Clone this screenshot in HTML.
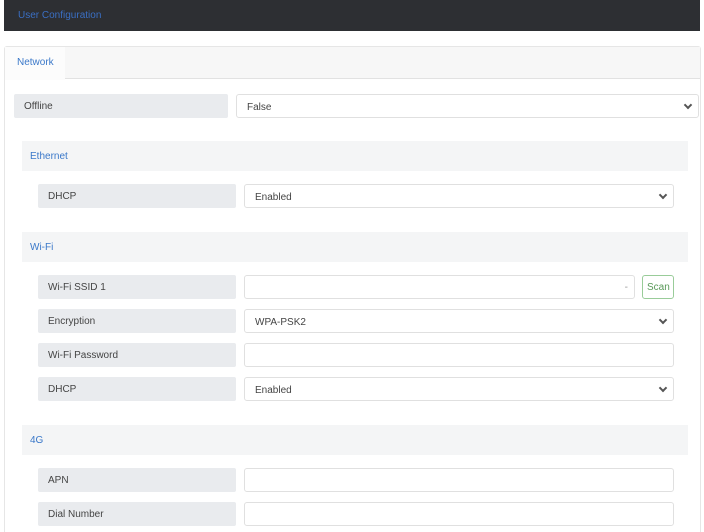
<!DOCTYPE html>
<html style="overflow:hidden;height:532px"><head><style>
body{margin:0;width:704px;height:532px;overflow:hidden;background:#fff;font-family:"Liberation Sans",sans-serif;font-size:10px;color:#444;position:relative}
div{position:absolute;box-sizing:border-box}
.hdr{left:4px;top:0;width:696px;height:31px;background:#2d2f33;color:#3a6fc4;padding:10px 14px;font-size:10px}
.card{left:4px;top:46px;width:697px;height:486px;border:1px solid #e6e6e6;border-bottom:none;border-radius:3px 3px 0 0}
.tabbar{left:5px;top:47px;width:695px;height:32px;background:#f7f7f7;border-bottom:1px solid #e2e2e2}
.tab{left:5px;top:47px;width:60px;height:33px;background:#fcfcfc;color:#3a78c9;padding:10px 12px}
.lbl{background:#e9ebee;border-radius:2px;padding:7px 10px;height:24px}
.inp{background:#fff;border:1px solid #e0e0e0;border-radius:3px;padding:7px 10px;height:24px}
.sec{background:#f4f5f6;color:#3a78c9;padding:10px 8px;height:30px}
.chev{position:absolute;right:7px;top:7px;width:4px;height:4px;border-right:2px solid #555;border-bottom:2px solid #555;transform:rotate(45deg)}
</style></head><body>
<div class="hdr">User Configuration</div>
<div class="card"></div>
<div class="tabbar"></div>
<div class="tab">Network</div>
<div class="lbl" style="left:14px;top:94px;width:214px">Offline</div>
<div class="inp" style="left:236px;top:94px;width:463px">False<span class="chev"></span></div>
<div class="sec" style="left:22px;top:141px;width:666px">Ethernet</div>
<div class="lbl" style="left:38px;top:184px;width:198px">DHCP</div>
<div class="inp" style="left:244px;top:184px;width:430px">Enabled<span class="chev"></span></div>
<div class="sec" style="left:22px;top:232px;width:666px">Wi-Fi</div>
<div class="lbl" style="left:38px;top:275px;width:198px">Wi-Fi SSID 1</div>
<div class="inp" style="left:244px;top:275px;width:391px"><span style="position:absolute;right:6px;top:6px;color:#999">-</span></div>
<div class="inp" style="left:642px;top:275px;width:32px;padding:6px 4px;color:#5a9a5a;border-color:#9c9">Scan</div>
<div class="lbl" style="left:38px;top:309px;width:198px">Encryption</div>
<div class="inp" style="left:244px;top:309px;width:430px">WPA-PSK2<span class="chev"></span></div>
<div class="lbl" style="left:38px;top:343px;width:198px">Wi-Fi Password</div>
<div class="inp" style="left:244px;top:343px;width:430px"></div>
<div class="lbl" style="left:38px;top:377px;width:198px">DHCP</div>
<div class="inp" style="left:244px;top:377px;width:430px">Enabled<span class="chev"></span></div>
<div class="sec" style="left:22px;top:425px;width:666px">4G</div>
<div class="lbl" style="left:38px;top:468px;width:198px">APN</div>
<div class="inp" style="left:244px;top:468px;width:430px"></div>
<div class="lbl" style="left:38px;top:502px;width:198px">Dial Number</div>
<div class="inp" style="left:244px;top:502px;width:430px"></div>
</body></html>
